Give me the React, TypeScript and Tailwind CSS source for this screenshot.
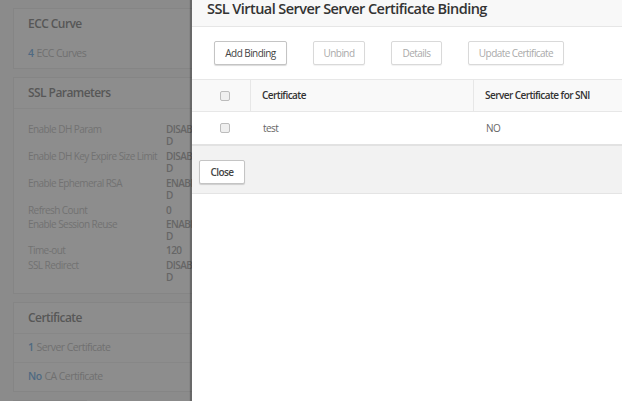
import React from "react";

const font = { fontFamily: '"Open Sans", "Noto Sans", sans-serif' };

function Row({ label, value }: { label: string; value: string[] }) {
  return (
    <div className="flex">
      <div className="w-[138px] shrink-0 whitespace-nowrap text-[10px] leading-[12px] text-[#727272]">{label}</div>
      <div className="whitespace-nowrap text-[10px] leading-[12px] font-semibold text-[#666]">
        {value.map((v, i) => (
          <div key={i}>{v}</div>
        ))}
      </div>
    </div>
  );
}

function Btn({ children, disabled, w }: { children: React.ReactNode; disabled?: boolean; w: string }) {
  return (
    <div
      className={
        w +
        " h-[24px] flex items-center justify-center rounded-[2px] border text-[10px] bg-white " +
        (disabled
          ? "border-[#d9d9d9] text-[#aaa] shadow-[0_1px_1px_rgba(0,0,0,0.06)]"
          : "border-[#c4c4c4] text-[#444] shadow-[0_1px_1px_rgba(0,0,0,0.15)]")
      }
    >
      {children}
    </div>
  );
}

function Check() {
  return <div className="w-[10px] h-[10px] rounded-[2px] border border-[#bcbcbc] bg-[#efefef]" />;
}

export default function App() {
  return (
    <div className="relative w-[622px] h-[401px] overflow-hidden bg-[#8b8b8b] tracking-[-0.035em]" style={font}>
      {/* background page */}
      <div className="pl-[13px] pt-[8px] flex flex-col gap-[8px]">
        <div className="w-[260px] h-[61px] border border-[#858585] bg-[#8d8d8d]">
          <div className="h-[30px] pl-[14px] flex items-center text-[12px] font-semibold text-[#575757]">ECC Curve</div>
          <div className="h-[29px] pl-[14px] flex items-center text-[10.5px] text-[#707070]">
            <span className="font-semibold text-[#4f6a82] mr-[3px]">4</span>ECC Curves
          </div>
        </div>
        <div className="w-[260px] border border-[#858585] bg-[#8d8d8d]">
          <div className="h-[31px] pl-[14px] flex items-center text-[12px] font-semibold text-[#575757] border-b border-[#878787]">
            SSL Parameters
          </div>
          <div className="pl-[14px] pt-[14px] pb-[10px] flex flex-col gap-[3px]">
            <Row label="Enable DH Param" value={["DISABLE", "D"]} />
            <Row label="Enable DH Key Expire Size Limit" value={["DISABLE", "D"]} />
            <Row label="Enable Ephemeral RSA" value={["ENABLE", "D"]} />
            <div className="flex flex-col gap-[2px]">
              <Row label="Refresh Count" value={["0"]} />
              <Row label="Enable Session Reuse" value={["ENABLE", "D"]} />
              <Row label="Time-out" value={["120"]} />
            </div>
            <Row label="SSL Redirect" value={["DISABLE", "D"]} />
          </div>
        </div>
        <div className="w-[260px] border border-[#858585] bg-[#8d8d8d]">
          <div className="h-[31px] pl-[14px] flex items-center text-[12px] font-semibold text-[#575757] border-b border-[#878787]">
            Certificate
          </div>
          <div className="h-[29px] pl-[14px] flex items-center text-[10.5px] text-[#707070] border-b border-[#878787]">
            <span className="font-semibold text-[#4f6a82] mr-[3px]">1</span>Server Certificate
          </div>
          <div className="h-[28px] pl-[14px] flex items-center text-[10.5px] text-[#707070]">
            <span className="font-semibold text-[#4f6a82] mr-[3px]">No</span>CA Certificate
          </div>
        </div>
        <div className="w-[74px] h-[20px] border border-[#858585] bg-[#8d8d8d]" />
      </div>

      {/* modal panel */}
      <div className="absolute top-0 right-0 w-[430px] h-full bg-white shadow-[-2px_0_1px_rgba(0,0,0,0.25)] flex flex-col">
        <div className="h-[27px] shrink-0 bg-[#f8f8f8] border-b border-[#e6e6e6] pl-[15px] text-[14.5px] font-semibold text-[#333] leading-[18px]">
          SSL Virtual Server Server Certificate Binding
        </div>
        <div className="h-[52px] shrink-0 flex items-start pt-[14px] pl-[22px] gap-[26px]">
          <Btn w="w-[73px]">Add Binding</Btn>
          <Btn w="w-[52px]" disabled>Unbind</Btn>
          <Btn w="w-[51px]" disabled>Details</Btn>
          <Btn w="w-[96px]" disabled>Update Certificate</Btn>
        </div>
        <div className="h-[33px] shrink-0 flex bg-[#f9f9f9] border-t border-b border-[#e7e7e7] text-[10px] font-semibold text-[#333]">
          <div className="w-[59px] flex items-center pl-[28px] border-r border-[#e7e7e7]">
            <Check />
          </div>
          <div className="w-[223px] flex items-center pl-[11px] border-r border-[#e7e7e7]">Certificate</div>
          <div className="flex-1 flex items-center pl-[11px]">Server Certificate for SNI</div>
        </div>
        <div className="h-[34px] shrink-0 flex text-[10px] text-[#666] border-b-2 border-[#e2e2e2]">
          <div className="w-[59px] flex items-center pl-[28px]">
            <Check />
          </div>
          <div className="w-[223px] flex items-center pl-[12px]">test</div>
          <div className="flex-1 flex items-center pl-[12px]">NO</div>
        </div>
        <div className="h-[48px] shrink-0 bg-[#f2f2f2] border-b border-[#e4e4e4] pl-[7px] pt-[14px]">
          <div className="w-[46px] h-[24px] flex items-center justify-center bg-white border border-[#c4c4c4] rounded-[2px] shadow-[0_1px_1px_rgba(0,0,0,0.15)] text-[10px] font-semibold text-[#444]">
            Close
          </div>
        </div>
      </div>
    </div>
  );
}
